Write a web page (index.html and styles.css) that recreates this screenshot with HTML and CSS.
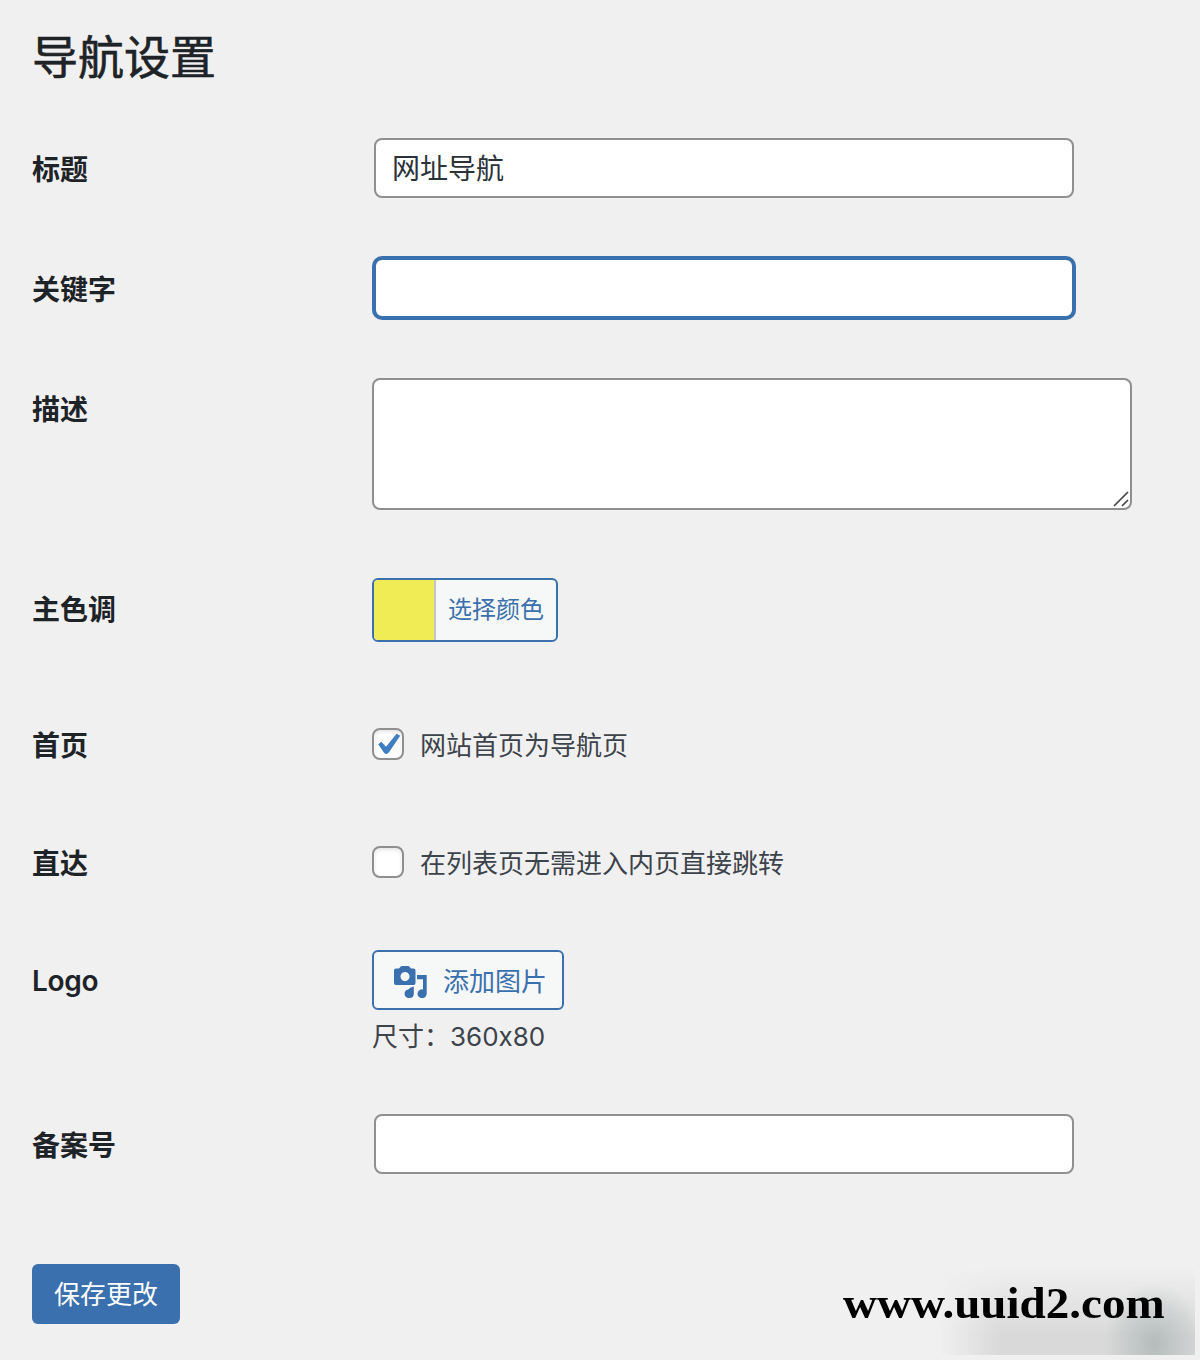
FILE: index.html
```
<!DOCTYPE html>
<html lang="zh-CN">
<head>
  <meta charset="UTF-8" />
  <meta name="viewport" content="width=device-width, initial-scale=1.0"/>
  <title>导航设置</title>
  <link rel="stylesheet" href="styles.css">
</head>
<body>
  <div class="wrap">
    <h1>导航设置</h1>

    <form>
      <div class="row">
        <label class="name" for="title">标题</label>
        <input type="text" id="title" value="网址导航"/>
      </div>

      <div class="row">
        <label class="name" for="keywords">关键字</label>
        <input type="text" id="keywords" class="focused"/>
      </div>

      <div class="row row-textarea">
        <label class="name" for="description">描述</label>
        <div class="textarea-box">
          <textarea id="description"></textarea>
          <svg class="grip" width="16" height="16" viewBox="0 0 16 16">
            <path d="M1 15L15 1M9 15L15 9" fill="none" stroke="#444" stroke-width="1.7"/>
          </svg>
        </div>
      </div>

      <div class="row row-color">
        <span class="name">主色调</span>
        <button type="button" class="color-button">
          <span class="swatch"></span>
          <span class="color-text">选择颜色</span>
        </button>
      </div>

      <div class="row row-check">
        <span class="name">首页</span>
        <label class="check">
          <span class="box">
            <svg width="32" height="32" viewBox="0 0 32 32">
              <path d="M6.200 16.200L9.400 13.800L14 18.800L24.600 5.800L28.200 7.700L17 24.300Q14.300 27.600 12 24.800Z" fill="#3f7fc1"/>
            </svg>
          </span>
          <span class="check-text">网站首页为导航页</span>
        </label>
      </div>

      <div class="row row-check">
        <span class="name">直达</span>
        <label class="check">
          <span class="box"></span>
          <span class="check-text">在列表页无需进入内页直接跳转</span>
        </label>
      </div>

      <div class="row row-logo">
        <span class="name name-latin">Logo</span>
        <div>
          <button type="button" class="media-button">
            <svg width="36" height="37" viewBox="0 0 36 37" fill="#3a70ad">
              <path fill-rule="evenodd" d="M4 6.500h3L8.500 4.800Q9 4 10 4h6q1 0 1.500.8L19 6.500h2.500q2 0 2 2V21q0 2-2 2H4q-2 0-2-2V8.500q0-2 2-2zM13 10a4.500 4.500 0 1 0 .01 0z"/>
              <path d="M25 13H34.700V31.700a4.600 4.400 0 1 1-3.700-4.300V17.200h-6z"/>
              <path d="M21.800 24.500V31.700a4.600 4.400 0 1 1-5.500-4.300Q17.500 25.500 21.800 24.500z"/>
            </svg>
            <span>添加图片</span>
          </button>
          <p class="hint">尺寸：360x80</p>
        </div>
      </div>

      <div class="row">
        <label class="name" for="beian">备案号</label>
        <input type="text" id="beian"/>
      </div>

      <button type="button" class="save">保存更改</button>
    </form>
  </div>

  <div class="smudge"></div>
  <div class="site">www.uuid2.com</div>
</body>
</html>
```

FILE: styles.css
```
* {
  margin: 0;
  padding: 0;
  box-sizing: border-box;
}

body {
  position: relative;
  height: 1360px;
  overflow: hidden;
  background: #f0f0f0;
  color: #1d2327;
  font-family: Inter, 'Noto Sans CJK SC', sans-serif;
  font-size: 26px;
}

input, textarea, button {
  font-family: inherit;
  outline: none;
}

.wrap {
  padding: 0 32px;
}

h1 {
  height: 108px;
  padding-top: 21px;
  font-size: 46px;
  font-weight: 400;
  line-height: 72px;
  -webkit-text-stroke: 0.6px #1d2327;
}

.row {
  display: grid;
  grid-template-columns: 340px auto;
  align-items: start;
  justify-content: start;
  height: 120px;
  padding-top: 30px;
}

.row-textarea {
  height: 200px;
}

.row-color {
  height: 136px;
}

.row-check {
  height: 118px;
}

.row-logo {
  height: 164px;
}

.name {
  padding-top: 11px;
  font-size: 28px;
  font-weight: 600;
  line-height: 42px;
}

.name-latin {
  padding-top: 10px;
  letter-spacing: -0.3px;
}

input[type="text"] {
  width: 700px;
  height: 60px;
  margin: 0 2px;
  padding: 0 16px 2px;
  border: 2px solid #8f8f8f;
  border-radius: 8px;
  background: #fff;
  color: #2c3338;
  font-size: 28px;
}

input[type="text"].focused {
  border-color: #3a70ad;
  box-shadow: 0 0 0 2px #3a70ad;
}

.textarea-box {
  position: relative;
  height: 132px;
}

textarea {
  display: block;
  width: 760px;
  height: 132px;
  padding: 4px 12px;
  border: 2px solid #8f8f8f;
  border-radius: 8px;
  background: #fff;
  resize: none;
}

.grip {
  position: absolute;
  right: 3px;
  bottom: 3px;
}

.color-button {
  display: flex;
  width: 186px;
  height: 64px;
  border: 2px solid #3a70ad;
  border-radius: 6px;
  background: #f6f7f7;
  overflow: hidden;
}

.swatch {
  width: 62px;
  height: 60px;
  border-right: 2px solid #c3c4c7;
  background: #efec55;
}

.color-text {
  flex: 1;
  color: #3a70ad;
  font-size: 24px;
  line-height: 60px;
  text-align: center;
}

.check {
  display: flex;
  align-items: center;
  gap: 16px;
  height: 60px;
  color: #3c434a;
}

.check-text {
  padding-bottom: 2px;
}

.box {
  display: flex;
  align-items: center;
  justify-content: center;
  width: 32px;
  height: 32px;
  border: 2px solid #8f8f8f;
  border-radius: 8px;
  background: #fff;
  box-shadow: inset 0 2px 4px rgba(0, 0, 0, 0.1);
}

.box svg {
  flex: none;
}

.media-button {
  display: flex;
  align-items: center;
  width: 192px;
  height: 60px;
  padding-left: 18px;
  gap: 15px;
  border: 2px solid #3a70ad;
  border-radius: 6px;
  background: #f6f7f7;
  color: #3a70ad;
  font-size: 26px;
  white-space: nowrap;
}

.media-button span {
  padding-bottom: 2px;
}

.hint {
  margin-top: 8px;
  color: #3c434a;
  line-height: 38px;
}

.save {
  display: block;
  width: 148px;
  height: 60px;
  margin-top: 60px;
  padding-bottom: 3px;
  border: none;
  border-radius: 6px;
  background: #3a70ad;
  color: #fff;
  font-size: 26px;
}

.smudge {
  position: absolute;
  left: 940px;
  top: 1268px;
  width: 255px;
  height: 87px;
  background:
    radial-gradient(ellipse 50px 62px at 214px 76px, rgba(165, 176, 176, 0.7), transparent),
    linear-gradient(to bottom, transparent, #d9d9d9 75%);
  -webkit-mask-image: linear-gradient(to right, transparent, #000 60px);
  mask-image: linear-gradient(to right, transparent, #000 60px);
}

.site {
  position: absolute;
  left: 843px;
  top: 1279px;
  font-family: 'Liberation Serif', serif;
  font-size: 44px;
  font-weight: bold;
  line-height: 50px;
  color: #000;
  transform: scaleX(1.07);
  transform-origin: left;
}
```
